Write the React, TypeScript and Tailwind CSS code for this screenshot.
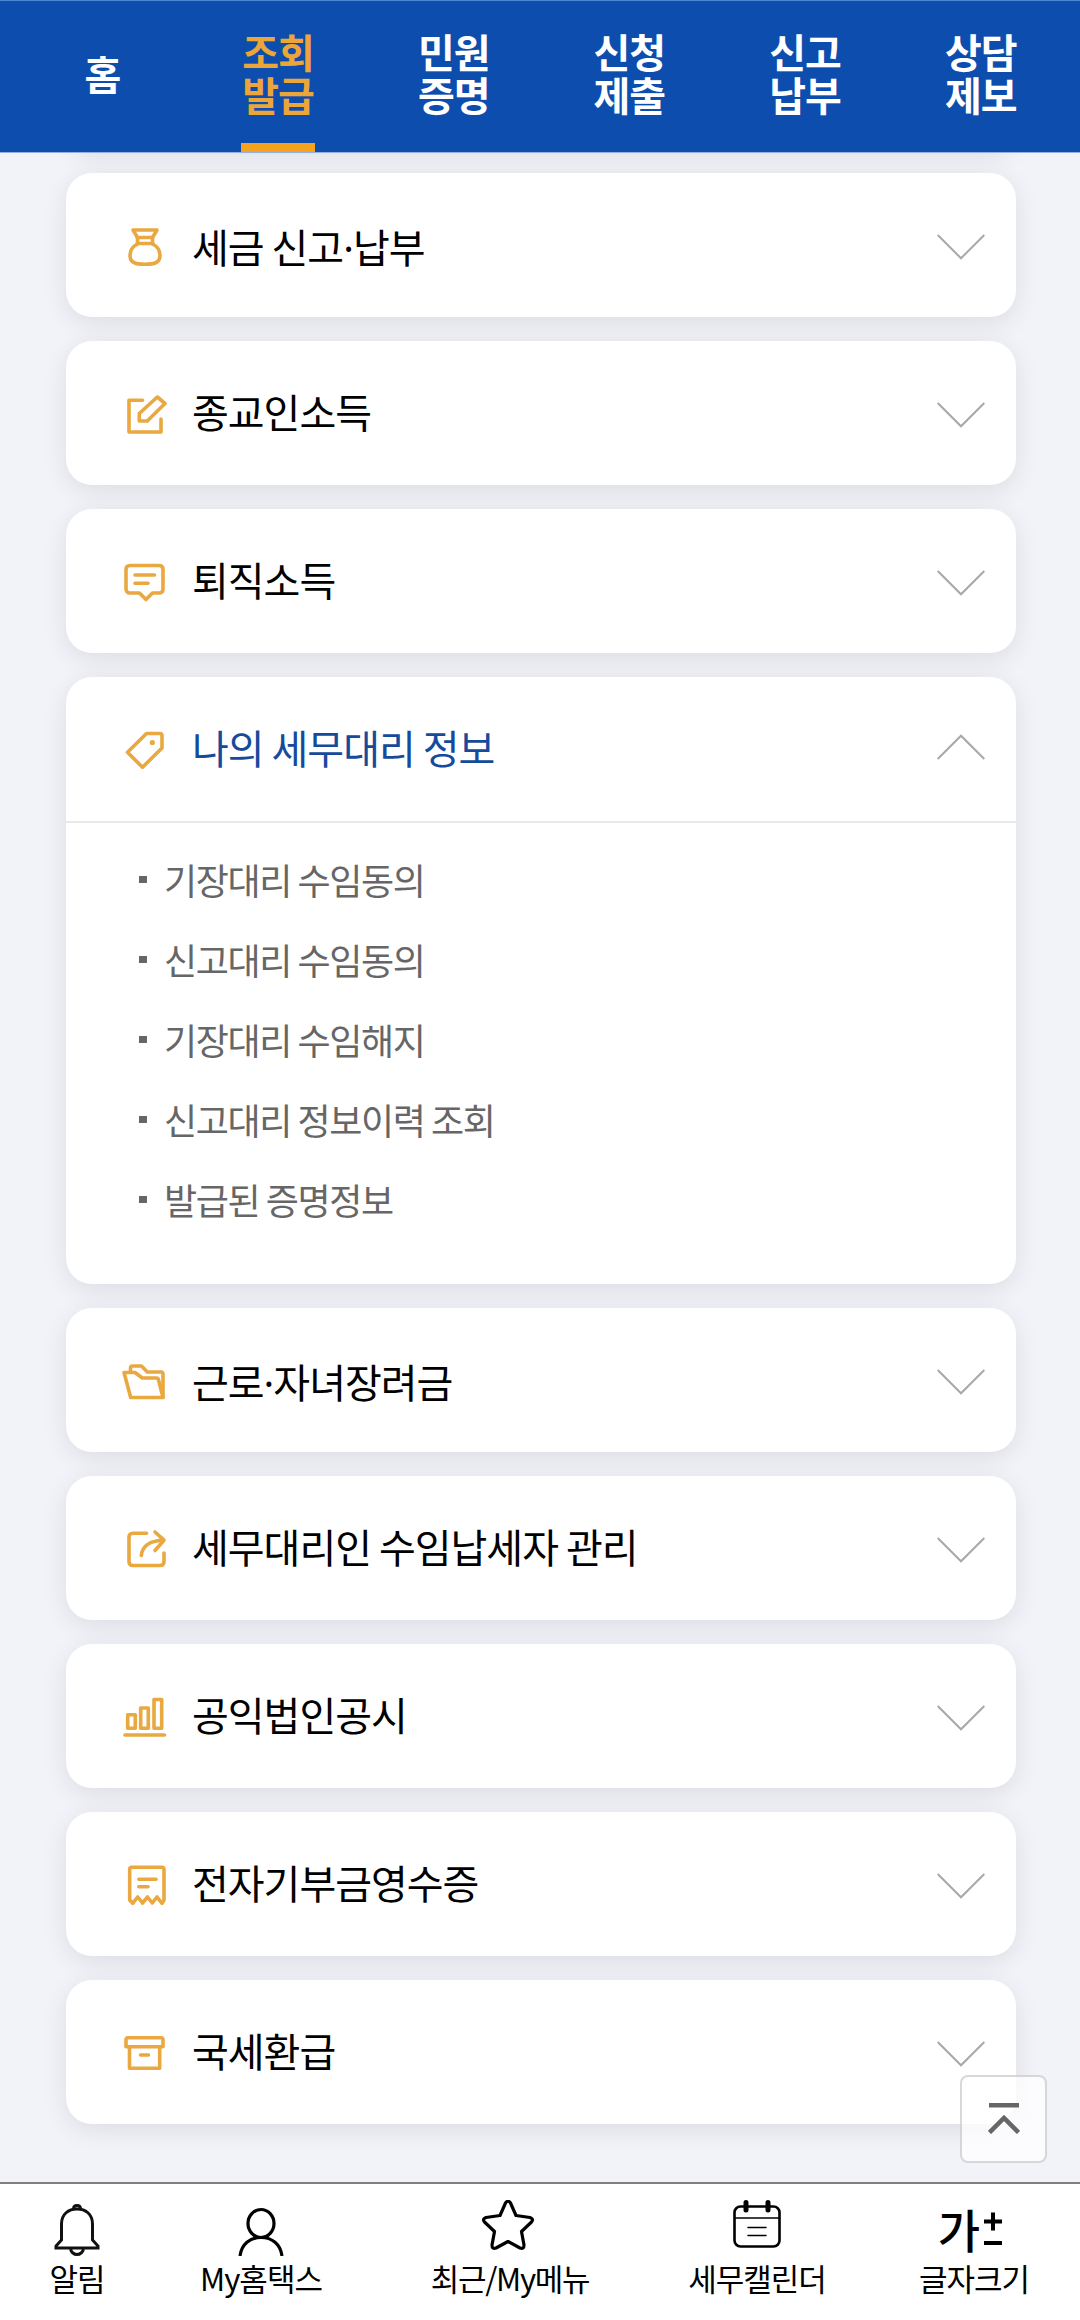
import React, { useState } from 'react';

const tabs = [
  ['홈'],
  ['조회', '발급'],
  ['민원', '증명'],
  ['신청', '제출'],
  ['신고', '납부'],
  ['상담', '제보'],
];

const icons: Record<string, React.ReactNode> = {
  bag: (
    <>
      <path d="M13 10H37L32.5 17.5H17.5Z" />
      <path d="M17.5 17.5V24M32.5 17.5V24M17 23.5H33" />
      <path d="M17.5 24C12.5 26.5 10 31 10 35.5C10 42 14.5 44.3 25 44.3S40 42 40 35.5C40 31 37.5 26.5 32.5 24" />
    </>
  ),
  edit: (
    <>
      <path d="M22.5 12.3H9V44H41V31" />
      <path d="M37.3 9L45 15.5L27.3 33H19.3V25.5Z" />
    </>
  ),
  comment: (
    <>
      <path d="M10 9.5H39Q43 9.5 43 13.5V33Q43 37 39 37H32.5L26 43.5L19.5 37H10Q6 37 6 33V13.5Q6 9.5 10 9.5Z" />
      <path d="M15 19H34.5M15 27.3H28" />
    </>
  ),
  tag: (
    <>
      <path d="M26.5 9.5H40Q42 9.5 42 11.5V24L22.5 43.3L7.5 28.3Z" />
      <circle cx="32.3" cy="18.5" r="2.6" fill="currentColor" stroke="none" />
    </>
  ),
  folder: (
    <>
      <path d="M10.5 17V13Q10.5 11 12.5 11H21.5L27.3 17H41Q43 17 43 19V42.5" />
      <path d="M4 17.5H15L22.3 23H36.5Q38 23 38.4 24.5L43 42.5H10.7Z" />
    </>
  ),
  share: (
    <>
      <path d="M26.5 10.3H13Q9 10.3 9 14.3V38.5Q9 42.5 13 42.5H40Q44 42.5 44 38.5V30" />
      <path d="M21.3 32.5Q23 17.5 44 17.2M35 9L44 17.2L35 27.5" />
    </>
  ),
  chart: (
    <>
      <path d="M7.7 23.7H15.3V37.3H7.7ZM20.7 17H28.3V37.3H20.7ZM34 8.5H41.7V37.3H34Z" />
      <path d="M5 44H44.5" />
    </>
  ),
  receipt: (
    <>
      <path d="M12 8.3H42Q44 8.3 44 10.3V41L42 44.3L37 38L32.3 44L27.5 38L22.5 44L17.7 38L12.7 44.3L9.7 41V10.3Q9.7 8.3 12 8.3Z" />
      <path d="M18.8 20.3H36M18.8 27.7H28" />
    </>
  ),
  archive: (
    <>
      <path d="M8 10.7H41Q43 10.7 43 12.7V19.7H6V12.7Q6 10.7 8 10.7Z" />
      <path d="M9.5 19.7V41.3H39.7V19.7M20.5 28H28.5" />
    </>
  ),
};

const menus = [
  { name: '세금 신고·납부', icon: 'bag' },
  { name: '종교인소득', icon: 'edit' },
  { name: '퇴직소득', icon: 'comment' },
  {
    name: '나의 세무대리 정보',
    icon: 'tag',
    items: ['기장대리 수임동의', '신고대리 수임동의', '기장대리 수임해지', '신고대리 정보이력 조회', '발급된 증명정보'],
  },
  { name: '근로·자녀장려금', icon: 'folder' },
  { name: '세무대리인 수임납세자 관리', icon: 'share' },
  { name: '공익법인공시', icon: 'chart' },
  { name: '전자기부금영수증', icon: 'receipt' },
  { name: '국세환급', icon: 'archive' },
];

const Chevron = ({ open }: { open: boolean }) => (
  <svg viewBox="0 0 48 26" className={`w-12 h-[26px] ${open ? 'rotate-180 -mt-1' : 'mt-1'}`} fill="none" stroke="#a8a8a8" strokeWidth="2">
    <path d="M0.7 1L24 24.3L47.3 1" />
  </svg>
);

// The CJK middle dot is too wide, so it is set in the Latin face
const MenuName = ({ name }: { name: string }) => {
  const [before, after] = name.split('·');
  if (!after) return <>{name}</>;
  return (
    <>
      {before}
      <span className="font-['Noto_Sans',sans-serif] leading-none">·</span>
      {after}
    </>
  );
};

const App = () => {
  const [active, setActive] = useState(1);
  const [opened, setOpened] = useState(3);

  return (
    <div className="relative flex flex-col w-[1080px] h-[2320px] overflow-hidden bg-[#f2f3f9] text-black tracking-[-1px] font-['Noto_Sans_CJK_KR',sans-serif]">
      {/* Top tabs */}
      <header className="relative z-10 shrink-0 flex h-[153px] pl-[14px] pr-3 bg-[#0d4dad] border-t border-t-[#4a86d4] border-b border-b-[#8fb0e2]">
        {tabs.map((lines, index) => (
          <button key={lines[0]} onClick={() => setActive(index)} className="flex-1 flex flex-col items-center">
            <span
              className={`flex-1 flex flex-col justify-center pb-[7px] pl-px text-[40px] leading-[43px] font-bold ${
                active === index ? 'text-[#eba538]' : 'text-white'
              }`}
            >
              {lines.map((line) => (
                <span key={line}>{line}</span>
              ))}
            </span>
            {active === index && <span className="w-[74px] h-[9px] -mt-[9px] bg-[#f5a21f]" />}
          </button>
        ))}
      </header>

      {/* Menu accordion */}
      <main className="flex-1 min-h-0 -mt-[148px] px-16 pl-[66px] space-y-6 overflow-hidden">
        <div className="h-36 rounded-[26px] bg-white shadow-[0_6px_26px_rgba(0,0,0,0.09)]" />
        {menus.map((menu, index) => {
          const open = opened === index;
          return (
            <section key={menu.name} className="rounded-[26px] bg-white shadow-[0_6px_26px_rgba(0,0,0,0.09)]">
              <button onClick={() => setOpened(open ? -1 : index)} className="flex items-center w-full h-36 pl-[54px] pr-[31px]">
                <svg
                  viewBox="0 0 50 50"
                  className="w-[50px] h-[50px] text-[#e9a840]"
                  fill="none"
                  stroke="currentColor"
                  strokeWidth="3.6"
                  strokeLinecap="round"
                  strokeLinejoin="round"
                >
                  {icons[menu.icon]}
                </svg>
                <span
                  className={`flex-1 ml-[22px] text-left text-[40px] leading-[60px] ${open ? 'text-[#164b9c]' : ''} ${
                    menu.name.includes('·') ? 'pt-[2px]' : 'pb-[5px]'
                  }`}
                >
                  <MenuName name={menu.name} />
                </span>
                <Chevron open={open} />
              </button>
              {open && menu.items && (
                <ul className="pt-[18px] pb-[43px] border-t-2 border-[#e8e8e8]">
                  {menu.items.map((item) => (
                    <li key={item} className="flex items-center h-20 pl-[73px] text-[#666]">
                      <span className="w-2 h-[7px] -mt-1 mr-[17px] bg-[#666]" />
                      <span className="pb-[5px] text-[36px] tracking-[-1.4px]">{item}</span>
                    </li>
                  ))}
                </ul>
              )}
            </section>
          );
        })}
      </main>

      {/* Scroll to top */}
      <button className="absolute left-[960px] top-[2075px] flex items-center justify-center w-[87px] h-[88px] rounded-lg border-2 border-black/15 bg-white/75">
        <svg viewBox="0 0 32 32" className="w-8 h-8 -mt-0.5" fill="none" stroke="#666" strokeWidth="4.5">
          <path d="M1 3.3H31M1.5 30.5L16 16L30.5 30.5" />
        </svg>
      </button>

      {/* Bottom bar */}
      <nav className="shrink-0 flex h-[138px] pt-4 border-t-2 border-[#7f7f7f] bg-white text-[31px] leading-[43px]">
        <a className="flex flex-col items-center w-[154px]">
          <svg viewBox="0 0 48 56" className="w-12 h-14" fill="none" stroke="#111" strokeWidth="3">
            <path d="M8.5 40V24C8.5 14 15.5 9 24 9S39.5 14 39.5 24V40L45 46V48H3V46Z" />
            <path d="M20.5 9Q20.5 5.5 24 5.5T27.5 9M17.5 49Q19 54.5 24 54.5T30.5 49" />
          </svg>
          알림
        </a>
        <a className="flex flex-col items-center w-[214px]">
          <svg viewBox="0 0 48 56" className="w-12 h-14" fill="none" stroke="#000" strokeWidth="3.2">
            <ellipse cx="24" cy="23.5" rx="13" ry="14" />
            <path d="M3 56C4.5 44 13 37.5 24 37.5S43.5 44 45 56" />
          </svg>
          My홈택스
        </a>
        <a className="flex flex-col items-center w-[284px] tracking-[-1.3px]">
          <svg viewBox="0 0 52 56" className="w-[52px] h-14 -ml-1" fill="none" stroke="#000" strokeWidth="3.2" strokeLinejoin="round">
            <path d="M23.5 3Q26 -0.5 28.5 3L34 15.5L48 17.5Q52 19 49.5 22L39.5 31.5L42 45Q42 49.5 38 48L26 41.5L14 48Q10 49.5 10 45L12.5 31.5L2.5 22Q0 19 4 17.5L18 15.5Z" />
          </svg>
          최근/My메뉴
        </a>
        <a className="flex flex-col items-center w-[210px]">
          <svg viewBox="0 0 48 56" className="w-12 h-14" fill="none" stroke="#000" strokeLinecap="round">
            <rect x="1.5" y="6.5" width="45" height="40" rx="6" strokeWidth="2.6" />
            <path d="M2 18H46M15 27.5H33M15 35.5H33" strokeWidth="1.5" />
            <path d="M13 2.5V10M35 2.5V10" strokeWidth="5" />
          </svg>
          세무캘린더
        </a>
        <a className="flex flex-col items-center w-[218px] pl-[6px]">
          <span className="flex items-center h-14 -ml-[7px]">
            <span className="text-[46px] font-medium">가</span>
            <svg viewBox="0 0 20 34" className="w-5 h-[34px] mt-0.5 ml-1" stroke="#000" strokeWidth="4">
              <path d="M1 9.5H19M10 0.5V18.5M1 31H19" />
            </svg>
          </span>
          글자크기
        </a>
      </nav>
    </div>
  );
};

export default App;
